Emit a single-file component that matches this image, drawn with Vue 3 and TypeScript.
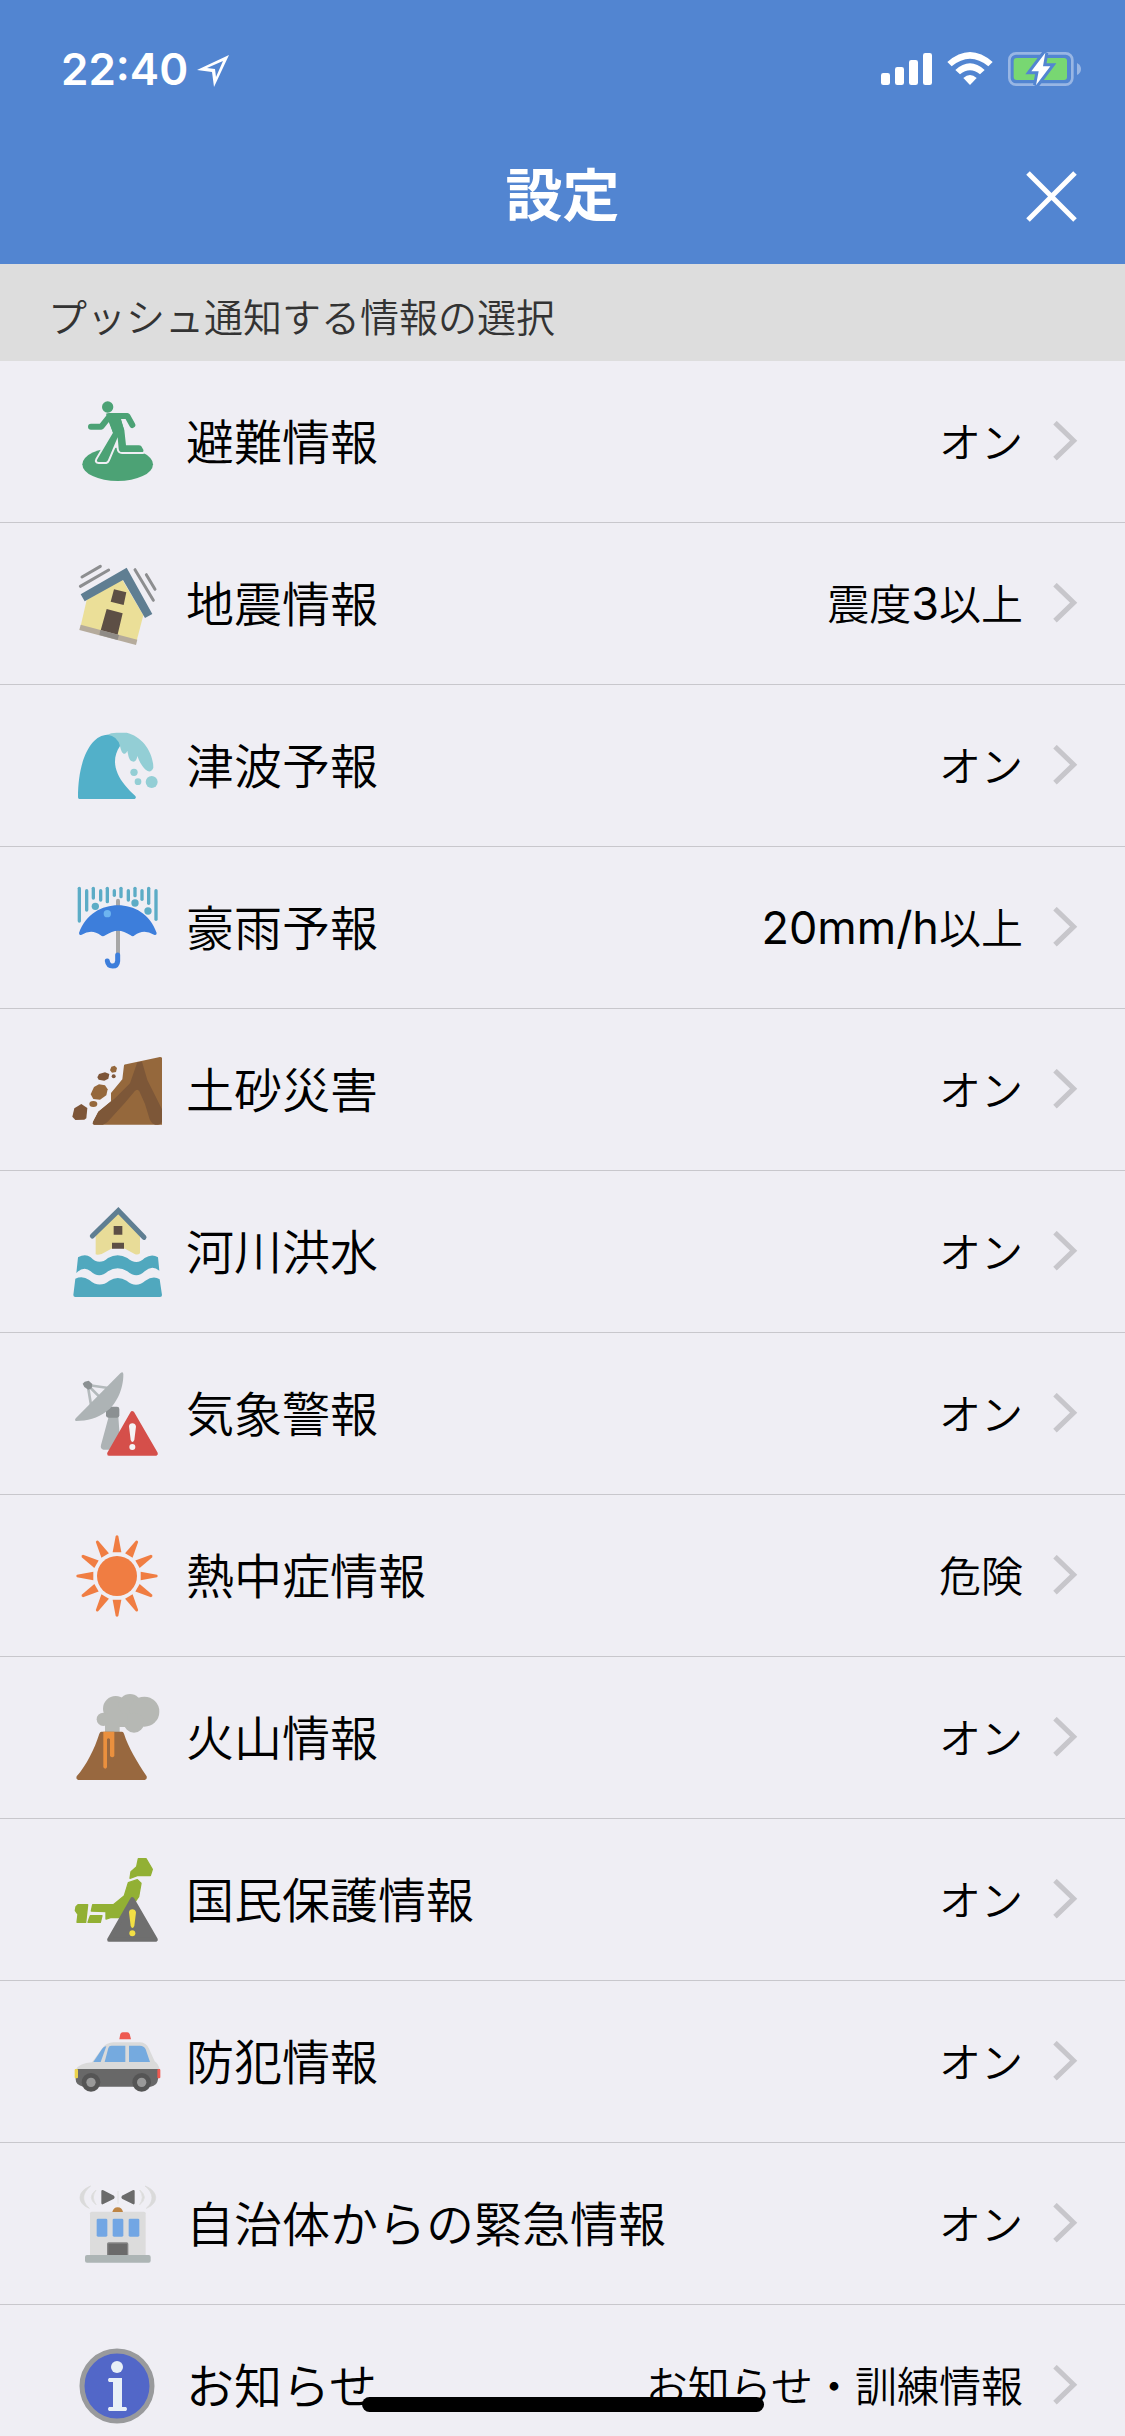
<script setup lang="ts">
interface Icon {
  viewBox: string
  markup: string
}

interface Setting {
  label: string
  value: string
  icon: Icon
}

interface TextRun {
  text: string
  latin: boolean
}

const sunRays: string = Array.from(
  { length: 12 },
  (_, i) =>
    `<path d="M197 558Q201 553 205 558L214 607H188Z" transform="rotate(${i * 30} 201 678)"/>`,
).join('')

const rain: string = [
  [88, 565, 663], [110, 572, 630], [130, 565, 594], [152, 572, 600],
  [172, 565, 605], [193, 572, 586], [213, 565, 590], [235, 572, 600],
  [255, 565, 587], [276, 572, 598], [296, 565, 610], [318, 572, 658],
]
  .map(([x, top, bottom]) => `<path d="M${x} ${top}V${bottom}"/>`)
  .join('')

const evacuation: Icon = {
  viewBox: '66 51 270 270',
  markup: `
    <ellipse cx="203" cy="253" rx="106" ry="50" fill="#4ca275"/>
    <path d="M176 120L189 158L142 238Q138 246 146 246H168Q172 245 174 240L203 172L206 206Q207 216 216 216H278Q282 215 280 209L274 199Q272 196 266 196H228L223 150L212 118Z" fill="#4ca275" stroke="#efeef4" stroke-width="12" paint-order="stroke"/>
    <g fill="#4ca275">
      <circle cx="173" cy="81" r="17"/>
      <path d="M168 101Q172 99 178 99H232V117H213L222 150L189 158L174 120Z"/>
    </g>
    <path d="M123 140H154L178 110M222 108H232L247 135" fill="none" stroke="#4ca275" stroke-width="18" stroke-linecap="round" stroke-linejoin="round"/>`,
}

const earthquake: Icon = {
  viewBox: '66 537 270 270',
  markup: `
    <path d="M110 660L216 598L280 706L260 782L92 738Z" fill="#ebdf98"/>
    <path d="M170 687L218 700L201 772L150 758ZM192 628L229 637L221 675L182 665Z" fill="#5d4f45"/>
    <path d="M92 734L262 779L258 795L88 750Z" fill="#b5ab9c"/>
    <path d="M151 750L207 765L203 780L148 765Z" fill="#8f8b86"/>
    <path d="M92 643L230 563L307 702L285 714L219 600L104 664Z" fill="#5f7e92"/>
    <path d="M96 591L151 559M91 619L176 570M255 569L310 661M289 584L315 628" stroke="#8d8e90" stroke-width="9" stroke-linecap="round"/>`,
}

const tsunami: Icon = {
  viewBox: '66 63 270 270',
  markup: `
    <path d="M172 104Q182 98 200 98H230C275 108 310 155 310 203Q302 222 287 209C275 198 268 185 262 168C260 182 254 188 246 184C236 180 235 165 232 152C225 168 215 164 210 138Z" fill="#93ced5"/>
    <path d="M84 292C84 180 122 106 172 104Q203 108 210 138C185 175 192 215 225 256Q240 275 256 288Q260 294 254 297H88Q84 297 84 292Z" fill="#52b0c9"/>
    <g fill="#93ced5"><circle cx="252" cy="217" r="11"/><circle cx="264" cy="245" r="10"/><circle cx="305" cy="246" r="18"/></g>`,
}

const heavyRain: Icon = {
  viewBox: '66 549 270 270',
  markup: `
    <g stroke="#5cacc6" stroke-width="10" stroke-linecap="round">${rain}</g>
    <g fill="#5cacc6"><circle cx="136" cy="619" r="11"/><circle cx="255" cy="609" r="11"/><circle cx="294" cy="633" r="11"/></g>
    <path d="M204 602V762" stroke="#a7a7a7" stroke-width="12" stroke-linecap="round"/>
    <path d="M87 699C108 642 156 616 204 616S300 642 320 699Q320 707 312 704Q280 685 254 706Q248 712 242 706Q222 692 204 692T166 706Q158 712 152 706Q126 685 95 704Q87 707 87 699Z" fill="#3d7edb"/>
    <circle cx="172" cy="641" r="11" fill="#6db4f0"/>
    <path d="M203 765V783Q202 798 188 798T172 783" fill="none" stroke="#3d7edb" stroke-width="15" stroke-linecap="round"/>`,
}

const landslide: Icon = {
  viewBox: '66 45 270 270',
  markup: `
    <path d="M222 106Q223 103 228 103L330 81Q336 81 336 85V284H132Q126 282 129 276L145 245L183 214V189L217 148Z" fill="#95683c"/>
    <path d="M262 97L276 95L292 150L336 238V275Q332 284 324 284H316Q305 282 299 268L285 222L268 184Q262 174 254 184L225 218L180 268Q168 283 158 284H132Q126 282 129 276L145 245L195 205L240 160Z" fill="#7d5738"/>
    <g fill="#95683c"><path d="M184 110L194 107L201 114L198 126L186 128L180 121Z"/><path d="M132 171L147 163L165 166L173 178L169 196L150 209L130 207L122 193Z"/><ellipse cx="130" cy="222" rx="12" ry="9"/></g>
    <g fill="#7d5538"><path d="M147 132L165 127L178 132L175 146L163 152L146 149L142 142Z"/><circle cx="191" cy="139" r="6"/><path d="M94 222L112 234L109 265L103 269L76 270L67 260L73 235Z"/></g>`,
}

const flood: Icon = {
  viewBox: '66 531 270 270',
  markup: `
    <path d="M137 614L205 548L270 614V670Q263 676 254 672L225 656Q204 650 184 656L155 672Q142 676 137 673Z" fill="#e8dc98"/>
    <path d="M191 588H217V614H191ZM186 638H222V656H186Z" fill="#5d4f45"/>
    <path d="M127 618L205 542L282 622" fill="none" stroke="#5f7e92" stroke-width="15" stroke-linecap="round"/>
    <g fill="#50a8be">
      <path d="M84 682Q106 669 122 682Q147 708 174 684Q203 668 232 684Q260 708 284 684Q306 670 324 682L328 722Q306 704 284 724Q260 748 232 724Q203 706 174 724Q147 748 122 724Q102 706 79 729Z"/>
      <path d="M76 746Q98 736 118 750Q148 776 178 752Q203 736 230 752Q258 776 286 752Q310 736 329 748L336 795Q336 801 330 801H76Q70 801 70 795Z"/>
    </g>`,
}

const weather: Icon = {
  viewBox: '66 57 270 270',
  markup: `
    <path d="M113 105L175 114M113 105L124 170M113 105L150 142" stroke="#b4babc" stroke-width="8"/>
    <path d="M104 95L116 92L127 102L125 115L115 119L103 111L98 101Z" fill="#8b9092"/>
    <path d="M176 200H205L212 299H160Q150 296 153 285Z" fill="#adb3b5"/>
    <rect x="168" y="170" width="40" height="33" rx="7" fill="#8b9092"/>
    <path d="M211 70Q219 62 220 72C221 120 196 166 170 184C142 205 112 213 78 213Q72 211 78 204Z" fill="#adb3b5"/>
    <path d="M247 190L317 311H178Z" fill="#d54f4a" stroke="#d54f4a" stroke-width="13" stroke-linejoin="round"/>
    <path d="M237 229Q238 220 247 220T258 229L253 270Q247 282 242 270Z" fill="#f5f3f5"/><circle cx="247" cy="291" r="9" fill="#f5f3f5"/>`,
}

const heat: Icon = {
  viewBox: '66 543 270 270',
  markup: `<g fill="#f07d42"><circle cx="201" cy="678" r="60"/>${sunRays}</g>`,
}

const volcano: Icon = {
  viewBox: '66 69 270 270',
  markup: `
    <g fill="#b6b8b4"><circle cx="197" cy="116" r="38"/><circle cx="240" cy="106" r="34"/><circle cx="283" cy="125" r="45"/><circle cx="160" cy="148" r="20"/><circle cx="252" cy="158" r="30"/><rect x="165" y="130" width="68" height="41" rx="8"/><rect x="165" y="150" width="44" height="38"/></g>
    <path d="M154 185H216Q220 185 222 191C235 232 260 273 290 319Q292 328 284 330H85Q77 328 80 319C110 284 133 238 148 191Q150 185 154 185Z" fill="#98683f"/>
    <path d="M160 185H193V258Q187 266 180 258V208Q175 202 171 208V292Q166 300 160 292Z" fill="#ea903e"/>`,
}

const civilProtection: Icon = {
  viewBox: '66 555 270 270',
  markup: `
    <g fill="#92b034" stroke="#92b034" stroke-width="4" stroke-linejoin="round">
      <path d="M265 566H288L307 598L301 617H262L240 625L243 605L260 590Z"/>
      <path d="M235 638L262 629L273 640L266 680L235 725L208 743L184 742L168 747V725L124 723L128 704H190L223 677Z"/>
      <path d="M84 704H113L107 757H81L84 733L76 722L78 710Z"/>
      <path d="M121 737H156L151 757H114Z"/>
    </g>
    <path d="M247 688L317 809H178Z" fill="#6f6f6f" stroke="#6f6f6f" stroke-width="13" stroke-linejoin="round"/>
    <path d="M237 727Q238 718 247 718T258 727L253 768Q247 780 242 768Z" fill="#f2df45"/><circle cx="247" cy="790" r="9" fill="#f2df45"/>`,
}

const crime: Icon = {
  viewBox: '66 51 270 270',
  markup: `
    <path d="M78 208Q88 190 126 187L158 143Q170 128 190 127H268Q288 127 296 144L314 184Q325 192 329 208Z" fill="#dadada"/>
    <path d="M130 186L156 147Q162 138 169 139L152 186ZM164 186L175 144Q177 137 184 137H226V186ZM237 137H270Q282 137 287 148L300 186H237Z" fill="#75aadf"/>
    <path d="M77 207H330L324 238Q322 258 302 260H100Q77 256 77 238Z" fill="#686868"/>
    <rect x="74" y="207" width="10" height="28" rx="3" fill="#ecd34c"/>
    <rect x="322" y="207" width="9" height="28" rx="3" fill="#ee5a52"/>
    <path d="M208 118L211 102Q213 97 218 97H232Q237 97 239 102L243 118Z" fill="#ee5a52"/>
    <g fill="#555"><circle cx="123" cy="247" r="28"/><circle cx="275" cy="247" r="28"/></g>
    <g fill="#999"><circle cx="123" cy="247" r="14"/><circle cx="275" cy="247" r="14"/></g>`,
}

const municipality: Icon = {
  viewBox: '66 537 270 270',
  markup: `
    <rect x="120" y="635" width="167" height="135" rx="5" fill="#dcdcdc"/>
    <path d="M187 636Q190 622 203 622T219 636Z" fill="#bf8645"/>
    <g fill="#72a6e4"><rect x="140" y="656" width="32" height="54" rx="4"/><rect x="188" y="656" width="32" height="54" rx="4"/><rect x="236" y="656" width="32" height="54" rx="4"/></g>
    <rect x="173" y="729" width="60" height="42" rx="3" fill="#6b6b6b" stroke="#858585" stroke-width="4"/>
    <rect x="105" y="765" width="197" height="23" rx="6" fill="#adb5b5"/>
    <path d="M154 573Q155 568 160 571L192 587Q196 591 192 596L160 612Q155 615 154 610ZM254 573Q253 568 248 571L216 587Q212 591 216 596L248 612Q253 615 254 610Z" fill="#6a6a6a"/>
    <path d="M122 558C80 574 80 610 118 625C95 604 95 580 122 558ZM285 558C327 574 327 610 289 625C312 604 312 580 285 558Z" fill="#dadada" stroke="#dadada" stroke-width="2"/>
    <path d="M138 570Q110 592 138 614Q122 592 138 570ZM269 570Q297 592 269 614Q285 592 269 570ZM204 573V611" fill="#dadada" stroke="#e0e0e0" stroke-width="3"/>`,
}

const notice: Icon = {
  viewBox: '0 0 90 90',
  markup: `
    <circle cx="45" cy="45" r="35" fill="#5267c8" stroke="#999a9c" stroke-width="5"/>
    <g fill="#e8f0f7"><circle cx="45" cy="26" r="6"/><path d="M37 37H50V66H54Q56 68 54 70H37Q35 68 37 66H41V41H37Q35 39 37 37Z"/></g>`,
}

const settings: Setting[] = [
  { label: '避難情報', value: 'オン', icon: evacuation },
  { label: '地震情報', value: '震度3以上', icon: earthquake },
  { label: '津波予報', value: 'オン', icon: tsunami },
  { label: '豪雨予報', value: '20mm/h以上', icon: heavyRain },
  { label: '土砂災害', value: 'オン', icon: landslide },
  { label: '河川洪水', value: 'オン', icon: flood },
  { label: '気象警報', value: 'オン', icon: weather },
  { label: '熱中症情報', value: '危険', icon: heat },
  { label: '火山情報', value: 'オン', icon: volcano },
  { label: '国民保護情報', value: 'オン', icon: civilProtection },
  { label: '防犯情報', value: 'オン', icon: crime },
  { label: '自治体からの緊急情報', value: 'オン', icon: municipality },
  { label: 'お知らせ', value: 'お知らせ・訓練情報', icon: notice },
]

// Latin letters and digits are set in their own face and size beside the kanji.
function runs(value: string): TextRun[] {
  return (value.match(/[\x21-\x7e]+|[^\x21-\x7e]+/g) ?? []).map((text) => ({
    text,
    latin: /^[\x21-\x7e]/.test(text),
  }))
}
</script>

<template>
  <div class="screen">
    <header class="header">
      <div class="status">
        <span class="time">22:40</span>
        <svg class="location" viewBox="0 0 33 34" aria-hidden="true">
          <path d="M32 1L17 33L15 18L0 16ZM26 7L10 14L18 15L19 23Z" />
        </svg>
        <div class="indicators">
          <svg class="signal" viewBox="63 66 153 102" aria-hidden="true">
            <rect x="63" y="129" width="27" height="36" rx="7" />
            <rect x="105" y="111" width="27" height="54" rx="7" />
            <rect x="147" y="90" width="27" height="75" rx="7" />
            <rect x="189" y="69" width="27" height="96" rx="7" />
          </svg>
          <svg class="wifi" viewBox="261 66 138 102" aria-hidden="true">
            <path d="M262 96Q330 36 398 96L385 109Q330 64 275 109Z" />
            <path d="M286 120Q330 80 374 120L360 133Q330 108 300 133Z" />
            <path d="M310 144Q330 126 350 144L330 165Z" />
          </svg>
          <svg class="battery" viewBox="444 66 219 102" aria-hidden="true">
            <rect x="448" y="70" width="189" height="94" rx="20" class="battery-case" />
            <path d="M651 99Q663 105 663 117T651 135Z" class="battery-tip" />
            <rect x="461" y="84" width="160" height="66" rx="9" class="battery-level" />
            <path d="M556 68L514 124H536L528 166L571 109H549Z" class="bolt" />
          </svg>
        </div>
      </div>
      <div class="nav">
        <h1 class="title">設定</h1>
        <button class="close" type="button" aria-label="閉じる">
          <svg viewBox="0 0 51 51" aria-hidden="true"><path d="M2 2L49 49M49 2L2 49" /></svg>
        </button>
      </div>
    </header>

    <main class="content">
      <h2 class="section">プッシュ通知する情報の選択</h2>
      <ul class="list">
        <li v-for="item in settings" :key="item.label">
          <button class="row" type="button">
            <svg class="icon" :viewBox="item.icon.viewBox" aria-hidden="true" v-html="item.icon.markup"></svg>
            <span class="label">{{ item.label }}</span>
            <span class="value"><span v-for="(run, i) in runs(item.value)" :key="i" :class="{ latin: run.latin }">{{ run.text }}</span></span>
            <svg class="chevron" viewBox="984 123 75 126" aria-hidden="true">
              <path d="M990 128L1046 182L990 236" />
            </svg>
          </button>
        </li>
      </ul>
    </main>
    <div class="home-indicator"></div>
  </div>
</template>

<style>
body {
  margin: 0;
}
</style>

<style scoped>
.screen {
  position: relative;
  display: flex;
  flex-direction: column;
  height: 100vh;
  overflow: hidden;
  background: #efeef4;
  color: #000;
  font-family: "Noto Sans CJK JP", sans-serif;
}

svg {
  display: block;
  flex: none;
}

.header {
  flex: none;
  background: #5285d1;
  color: #fff;
}

.status {
  display: flex;
  align-items: center;
  box-sizing: border-box;
  height: 138px;
  padding: 0 44px 0 61px;
}

.time {
  font: 600 44px/60px Inter, sans-serif;
}

.location {
  width: 33px;
  height: 34px;
  margin: 4px 0 0 9px;
  fill: #fff;
  fill-rule: evenodd;
}

.indicators {
  display: flex;
  gap: 15px;
  margin-left: auto;
  fill: #fff;
}

.signal {
  width: 51px;
  height: 34px;
}

.wifi {
  width: 46px;
  height: 34px;
}

.battery {
  width: 73px;
  height: 34px;
}

.battery-case {
  fill: none;
  stroke: #98b6e4;
  stroke-width: 8;
}

.battery-tip {
  fill: #98b6e4;
}

.battery-level {
  fill: #78d772;
}

.bolt {
  stroke: #5285d1;
  stroke-width: 18;
  paint-order: stroke;
}

.nav {
  display: grid;
  grid-template-columns: 1fr auto 1fr;
  align-items: center;
  height: 116px;
  padding: 0 48px 10px;
}

.title {
  grid-column: 2;
  margin: 0;
  padding-bottom: 10px;
  font-size: 57px;
  font-weight: 700;
  line-height: 80px;
}

.close {
  justify-self: end;
  padding: 0;
  border: 0;
  background: none;
}

.close svg {
  width: 51px;
  height: 51px;
  fill: none;
  stroke: #fff;
  stroke-width: 5;
}

.content {
  flex: 1;
  min-height: 0;
  overflow-y: auto;
  scrollbar-width: none;
}

.section {
  margin: 0;
  padding: 21px 48px 16px;
  background: #ddd;
  color: #333;
  font-size: 39px;
  font-weight: 350;
  line-height: 60px;
}

.list {
  margin: 0;
  padding: 0;
  list-style: none;
}

.row {
  display: flex;
  align-items: center;
  width: 100%;
  padding: 36px 47px 35px 72px;
  border: 0;
  border-bottom: 1px solid #c8c7cc;
  background: none;
  color: inherit;
  font: inherit;
  text-align: left;
}

.icon {
  width: 90px;
  height: 90px;
}

.label {
  margin-left: 24px;
  padding-bottom: 6px;
  font-size: 48px;
  font-weight: 350;
  line-height: 72px;
}

.value {
  margin-left: auto;
  padding-bottom: 4px;
  font-size: 42px;
  font-weight: 350;
  line-height: 72px;
}

.latin {
  font-family: Inter, sans-serif;
  font-size: 45px;
  font-weight: 400;
  line-height: 1;
}

.chevron {
  width: 25px;
  height: 42px;
  margin-left: 30px;
  fill: none;
  stroke: #c7c6cb;
  stroke-width: 15;
}

.home-indicator {
  position: absolute;
  bottom: 24px;
  left: 50%;
  width: 402px;
  height: 15px;
  border-radius: 8px;
  background: #000;
  transform: translateX(-50%);
}
</style>
